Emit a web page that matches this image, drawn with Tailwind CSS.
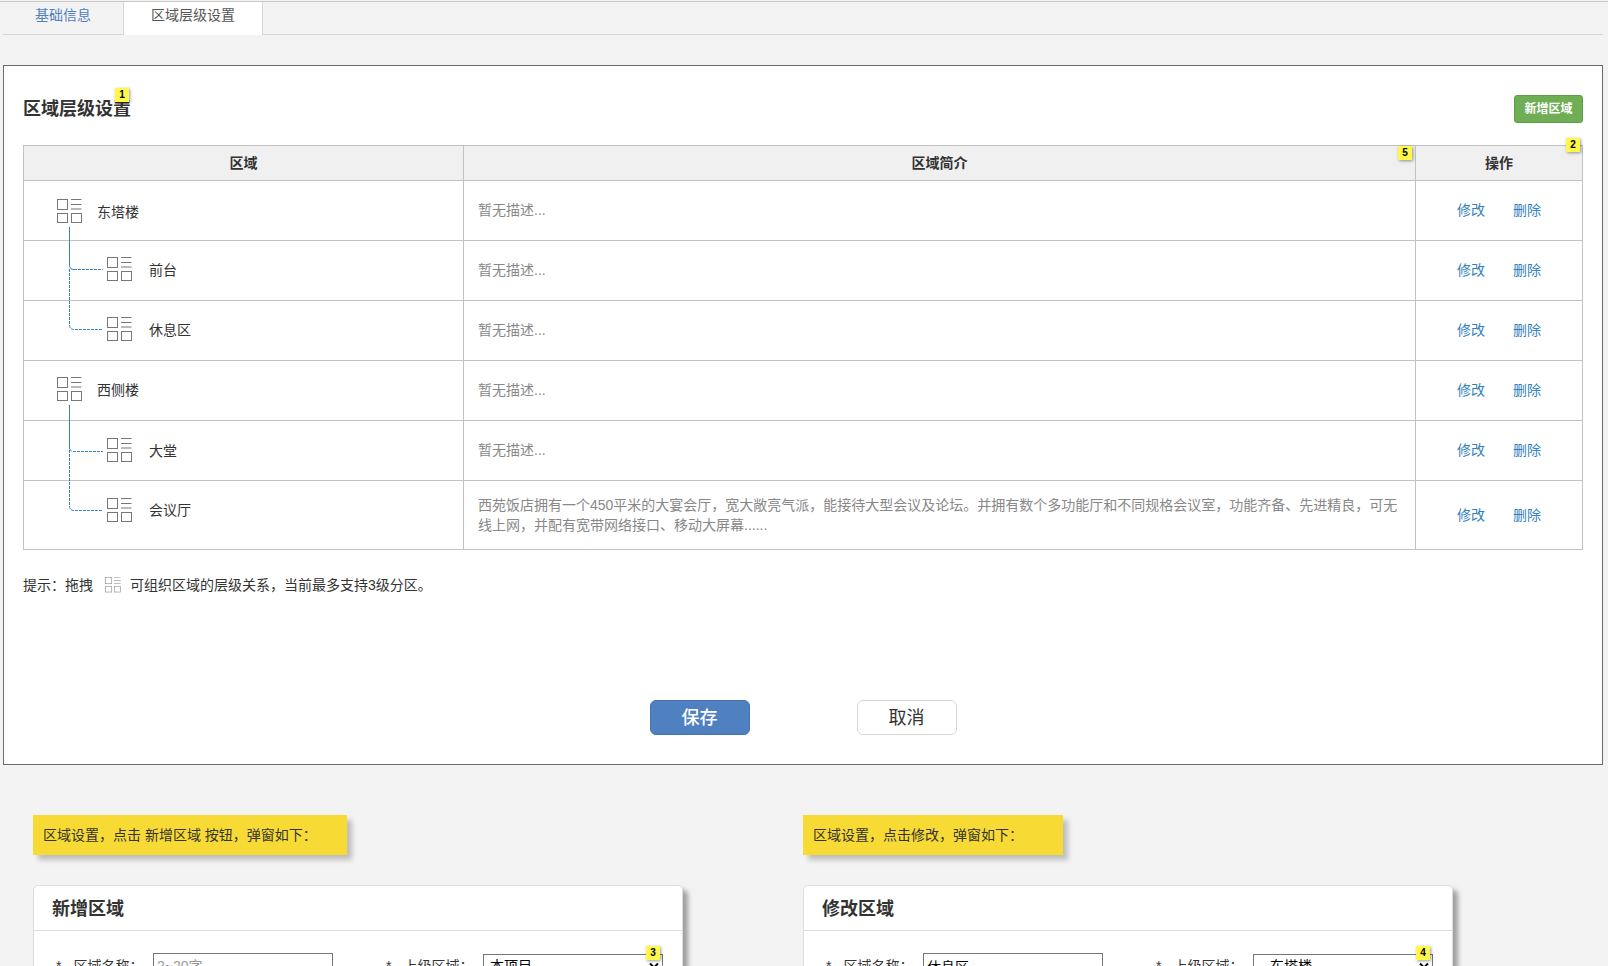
<!DOCTYPE html>
<html lang="zh-CN">
<head>
<meta charset="utf-8">
<meta name="viewport" content="width=device-width, initial-scale=1">
<title>区域层级设置</title>
<script src="https://cdn.jsdelivr.net/npm/@tailwindcss/browser@4"></script>
</head>
<body class="h-screen overflow-hidden bg-[#f3f3f3] font-['Liberation_Sans','Noto_Sans_CJK_SC',sans-serif] text-sm leading-5 text-[#333]">
<svg class="hidden" aria-hidden="true">
  <symbol id="grid" viewBox="0 0 25 25">
    <g fill="none" stroke="#777" stroke-width="1">
      <rect x="0.5" y="0.5" width="10" height="10"/>
      <rect x="0.5" y="14.5" width="10" height="9"/>
      <rect x="14.5" y="14.5" width="10" height="9"/>
      <path d="M14 0.500h10.500M14 5.500h10.500M14 10h10.500"/>
    </g>
  </symbol>
</svg>

<nav class="mt-px flex border-t border-[#c8c8c8] pl-[3px] pr-[5px]">
  <a href="#" class="flex h-[33px] w-[120px] justify-center border-b border-[#d7d7d7] pt-[3px] text-[#4f80c0]">基础信息</a>
  <a href="#" aria-current="page" class="flex h-[33px] w-[140px] justify-center border-x border-[#d7d7d7] bg-white pt-[3px] text-[#555]">区域层级设置</a>
  <span class="h-[33px] flex-1 border-b border-[#d7d7d7]"></span>
</nav>

<main class="ml-[3px] mr-[5px] mt-[30px] border border-[#6b6b6b] bg-white px-[19px] pb-[29px] pt-[29px]">
  <header class="flex items-center justify-between">
    <h1 class="relative text-lg font-bold leading-7">区域层级设置
      <span class="absolute -top-[7px] right-0.5 h-3.5 w-3.5 bg-[#fff849] text-center text-[10px] font-bold leading-[14px] text-black shadow-[1px_1px_3px_rgba(0,0,0,0.4)]">1</span>
    </h1>
    <button class="h-7 w-[69px] rounded-[3px] border border-[#5f9f45] bg-[#70ae56] text-xs font-bold text-white">新增区域</button>
  </header>

  <div class="relative mt-[22px]">
    <span class="absolute right-[3px] -top-[7px] z-10 h-3.5 w-3.5 bg-[#fff849] text-center text-[10px] font-bold leading-[14px] text-black shadow-[1px_1px_3px_rgba(0,0,0,0.4)]">2</span>
    <table class="w-full table-fixed border-collapse border border-[#c2c2c2]">
      <colgroup><col class="w-[440px]"><col><col class="w-[167px]"></colgroup>
      <thead>
        <tr class="h-[35px] bg-[#f0f0f0]">
          <th class="border border-[#c2c2c2] font-bold">区域</th>
          <th class="relative border border-[#c2c2c2] font-bold">区域简介
            <span class="absolute right-[3px] top-0 h-3.5 w-3.5 bg-[#fff849] text-center text-[10px] font-bold leading-[14px] text-black shadow-[1px_1px_3px_rgba(0,0,0,0.4)]">5</span></th>
          <th class="border border-[#c2c2c2] font-bold">操作</th>
        </tr>
      </thead>
      <tbody>
        <tr class="h-[60px]">
          <td class="relative border border-[#c2c2c2] pl-[33px] pt-0.5">
            <div class="flex items-center gap-[15px]"><svg class="h-[25px] w-[25px]"><use href="#grid"/></svg><span>东塔楼</span></div>
            <svg class="absolute left-[45px] top-[46px] z-10 h-[104px] w-[35px]" viewBox="0 0 35 104" fill="none" stroke="#3382be">
              <path d="M0.500 0V38Q0.500 42.500 5 42.500"/><path d="M5 42.500H34" stroke-dasharray="3 1"/>
              <path d="M0.500 42V98Q0.500 102.500 5 102.500H34" stroke-dasharray="3 1"/>
            </svg>
          </td>
          <td class="border border-[#c2c2c2] px-3.5 pb-0.5 text-[#888]">暂无描述...</td>
          <td class="border border-[#c2c2c2] pb-0.5"><div class="flex justify-center gap-7 text-[#3382be]"><a href="#">修改</a><a href="#">删除</a></div></td>
        </tr>
        <tr class="h-[60px]">
          <td class="border border-[#c2c2c2] pb-0.5 pl-[83px]"><div class="flex items-center gap-[17px]"><svg class="h-[25px] w-[25px]"><use href="#grid"/></svg><span>前台</span></div></td>
          <td class="border border-[#c2c2c2] px-3.5 pb-0.5 text-[#888]">暂无描述...</td>
          <td class="border border-[#c2c2c2] pb-0.5"><div class="flex justify-center gap-7 text-[#3382be]"><a href="#">修改</a><a href="#">删除</a></div></td>
        </tr>
        <tr class="h-[60px]">
          <td class="border border-[#c2c2c2] pb-0.5 pl-[83px]"><div class="flex items-center gap-[17px]"><svg class="h-[25px] w-[25px]"><use href="#grid"/></svg><span>休息区</span></div></td>
          <td class="border border-[#c2c2c2] px-3.5 pb-0.5 text-[#888]">暂无描述...</td>
          <td class="border border-[#c2c2c2] pb-0.5"><div class="flex justify-center gap-7 text-[#3382be]"><a href="#">修改</a><a href="#">删除</a></div></td>
        </tr>
        <tr class="h-[60px]">
          <td class="relative border border-[#c2c2c2] pb-0.5 pl-[33px]">
            <div class="flex items-center gap-[15px]"><svg class="h-[25px] w-[25px]"><use href="#grid"/></svg><span>西侧楼</span></div>
            <svg class="absolute left-[45px] top-[44px] z-10 h-[107px] w-[35px]" viewBox="0 0 35 107" fill="none" stroke="#3382be">
              <path d="M0.500 0V42Q0.500 46.500 5 46.500H34" stroke-dasharray="3 1"/>
              <path d="M0.500 1V101Q0.500 105.500 5 105.500H34" stroke-dasharray="3 1"/>
            </svg>
          </td>
          <td class="border border-[#c2c2c2] px-3.5 pb-0.5 text-[#888]">暂无描述...</td>
          <td class="border border-[#c2c2c2] pb-0.5"><div class="flex justify-center gap-7 text-[#3382be]"><a href="#">修改</a><a href="#">删除</a></div></td>
        </tr>
        <tr class="h-[60px]">
          <td class="border border-[#c2c2c2] pl-[83px]"><div class="flex items-center gap-[17px]"><svg class="h-[25px] w-[25px]"><use href="#grid"/></svg><span>大堂</span></div></td>
          <td class="border border-[#c2c2c2] px-3.5 pb-0.5 text-[#888]">暂无描述...</td>
          <td class="border border-[#c2c2c2] pb-0.5"><div class="flex justify-center gap-7 text-[#3382be]"><a href="#">修改</a><a href="#">删除</a></div></td>
        </tr>
        <tr class="h-[69px]">
          <td class="border border-[#c2c2c2] pb-2.5 pl-[83px]"><div class="flex items-center gap-[17px]"><svg class="h-[25px] w-[25px]"><use href="#grid"/></svg><span>会议厅</span></div></td>
          <td class="border border-[#c2c2c2] px-3.5 text-[#888]">西苑饭店拥有一个450平米的大宴会厅，宽大敞亮气派，能接待大型会议及论坛。并拥有数个多功能厅和不同规格会议室，功能齐备、先进精良，可无线上网，并配有宽带网络接口、移动大屏幕......</td>
          <td class="border border-[#c2c2c2]"><div class="flex justify-center gap-7 text-[#3382be]"><a href="#">修改</a><a href="#">删除</a></div></td>
        </tr>
      </tbody>
    </table>
  </div>

  <p class="mt-[25px] flex items-center">提示：拖拽<svg class="ml-3 mr-[9px] h-4 w-4 opacity-80"><use href="#grid"/></svg>可组织区域的层级关系，当前最多支持3级分区。</p>

  <div class="mt-[105px] flex justify-center gap-[107px]">
    <button class="h-[35px] w-[100px] rounded-md border border-[#4674b0] bg-[#4f80c0] text-lg font-medium leading-6 text-white">保存</button>
    <button class="h-[35px] w-[100px] rounded-md border border-[#d7d7d7] bg-white text-lg leading-6">取消</button>
  </div>
</main>

<div class="mt-[50px] flex gap-[120px] pl-[33px]">
  <section class="w-[650px] shrink-0">
    <p class="flex h-10 w-[314px] items-center bg-[#f7da34] px-2.5 shadow-[5px_5px_5px_rgba(0,0,0,0.22)]">区域设置，点击 新增区域 按钮，弹窗如下：</p>
    <form class="mt-[30px] rounded-[5px] border border-[#ddd] bg-white pb-60 shadow-[5px_5px_5px_rgba(0,0,0,0.35)]">
      <h2 class="flex h-[45px] items-center border-b border-[#ddd] pl-[18px] pt-0.5 text-lg font-bold">新增区域</h2>
      <div class="flex items-center pl-[22px] pt-[22px]">
        <label for="name-new" class="flex w-[97px] gap-3 whitespace-nowrap"><span>*</span>区域名称：</label>
        <input id="name-new" type="text" placeholder="2~20字" class="h-[25px] w-[180px] border border-[#767676] px-[3px] text-black placeholder:text-[#999]">
        <label for="parent-new" class="ml-[53px] flex w-[97px] gap-3 whitespace-nowrap"><span>*</span>上级区域：</label>
        <span class="relative">
          <select id="parent-new" class="block h-[23px] w-[180px] appearance-none border border-[#767676] bg-white px-1.5 text-black"><option>本项目</option></select>
          <svg class="pointer-events-none absolute right-1 top-2 h-2 w-2.5" viewBox="0 0 10 8" fill="none" stroke="#000" stroke-width="2"><path d="M1 1.500l4 4 4-4"/></svg>
          <span class="absolute -top-2 right-[3px] h-3.5 w-3.5 bg-[#fff849] text-center text-[10px] font-bold leading-[14px] text-black shadow-[1px_1px_3px_rgba(0,0,0,0.4)]">3</span>
        </span>
      </div>
    </form>
  </section>
  <section class="w-[650px] shrink-0">
    <p class="flex h-10 w-[260px] items-center bg-[#f7da34] px-2.5 shadow-[5px_5px_5px_rgba(0,0,0,0.22)]">区域设置，点击修改，弹窗如下：</p>
    <form class="mt-[30px] rounded-[5px] border border-[#ddd] bg-white pb-60 shadow-[5px_5px_5px_rgba(0,0,0,0.35)]">
      <h2 class="flex h-[45px] items-center border-b border-[#ddd] pl-[18px] pt-0.5 text-lg font-bold">修改区域</h2>
      <div class="flex items-center pl-[22px] pt-[22px]">
        <label for="name-edit" class="flex w-[97px] gap-3 whitespace-nowrap"><span>*</span>区域名称：</label>
        <input id="name-edit" type="text" value="休息区" class="h-[25px] w-[180px] border border-[#767676] px-[3px] text-black">
        <label for="parent-edit" class="ml-[53px] flex w-[97px] gap-3 whitespace-nowrap"><span>*</span>上级区域：</label>
        <span class="relative">
          <select id="parent-edit" class="block h-[23px] w-[180px] appearance-none border border-[#767676] bg-white px-4 text-black"><option>东塔楼</option></select>
          <svg class="pointer-events-none absolute right-1 top-2 h-2 w-2.5" viewBox="0 0 10 8" fill="none" stroke="#000" stroke-width="2"><path d="M1 1.500l4 4 4-4"/></svg>
          <span class="absolute -top-2 right-[3px] h-3.5 w-3.5 bg-[#fff849] text-center text-[10px] font-bold leading-[14px] text-black shadow-[1px_1px_3px_rgba(0,0,0,0.4)]">4</span>
        </span>
      </div>
    </form>
  </section>
</div>
</body>
</html>
